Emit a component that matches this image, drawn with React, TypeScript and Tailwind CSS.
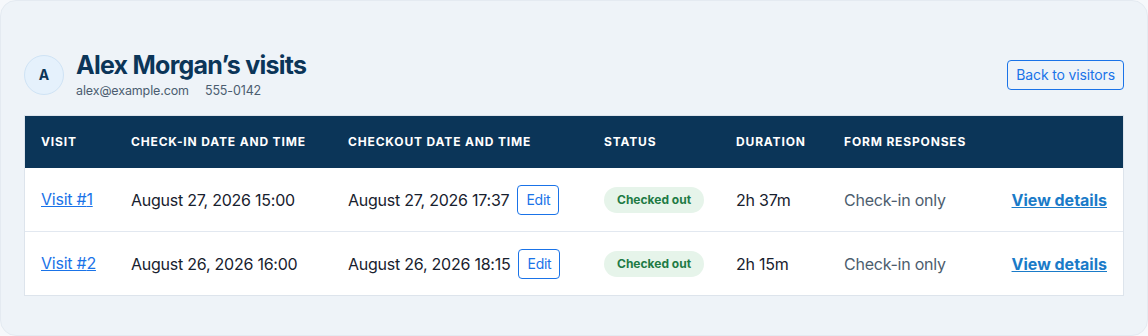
const visits = [
  {
    id: 1,
    checkIn: 'August 27, 2026 15:00',
    checkOut: 'August 27, 2026 17:37',
    duration: '2h 37m',
  },
  {
    id: 2,
    checkIn: 'August 26, 2026 16:00',
    checkOut: 'August 26, 2026 18:15',
    duration: '2h 15m',
  },
];

const th = 'px-4 py-4 text-left text-[12px] leading-5 font-bold uppercase tracking-[0.07em] text-white whitespace-nowrap';
const td = 'px-4 py-4 text-[16px] tracking-[-0.015em] whitespace-nowrap';

export default function App() {
  return (
    <div className="min-h-screen bg-[#f6f8fb] font-['Inter',sans-serif]">
      <div className="h-[336px] rounded-2xl border border-[#e4eaf1] bg-[#eef3f8] px-[23px] pt-[48px]">
        <div className="flex items-center justify-between">
          <div className="flex items-center gap-3">
            <div className="flex h-10 w-10 items-center justify-center rounded-full border border-[#cfe3f5] bg-[#e5f1fc] text-[14px] font-bold text-[#0b3558]">
              A
            </div>
            <div>
              <h1 className="text-[25px] leading-8 font-bold tracking-[-0.03em] text-[#0b3558]">
                Alex Morgan’s visits
              </h1>
              <div className="mt-px flex gap-4 text-[12.5px] leading-[18px] tracking-[-0.01em] text-[#4b5d70]">
                <span>alex@example.com</span>
                <span>555-0142</span>
              </div>
            </div>
          </div>
          <button className="h-[30px] rounded-[4px] border border-[#1a73e8] bg-transparent px-[8px] text-[14px] tracking-[-0.01em] text-[#1a73e8]">
            Back to visitors
          </button>
        </div>

        <div className="mt-[15px] border border-[#dde4ec] bg-white">
          <table className="w-full table-fixed border-collapse">
            <thead className="bg-[#0b3558]">
              <tr>
                <th className={`${th} w-[90px]`}>Visit</th>
                <th className={`${th} w-[217px]`}>Check-in date and time</th>
                <th className={`${th} w-[256px]`}>Checkout date and time</th>
                <th className={`${th} w-[132px]`}>Status</th>
                <th className={`${th} w-[108px]`}>Duration</th>
                <th className={`${th} w-[152px]`}>Form responses</th>
                <th className={th}></th>
              </tr>
            </thead>
            <tbody>
              {visits.map((v, i) => (
                <tr key={v.id} className={i > 0 ? 'border-t border-[#e2e8f0]' : ''}>
                  <td className={`${td} leading-[31px]`}>
                    <a href="#" className="text-[#1a73e8] underline">Visit #{v.id}</a>
                  </td>
                  <td className={`${td} text-[#18212e]`}>{v.checkIn}</td>
                  <td className={`${td} text-[#18212e]`}>
                    <div className="flex items-center gap-2">
                      <span>{v.checkOut}</span>
                      <button className="h-[30px] rounded-[4px] border border-[#1a73e8] px-[8px] text-[14px] text-[#1a73e8]">
                        Edit
                      </button>
                    </div>
                  </td>
                  <td className="px-4 py-4 whitespace-nowrap">
                    <span className="inline-flex h-[26px] items-center rounded-full bg-[#e6f4ea] px-[13px] text-[12px] font-bold text-[#1e7b45]">
                      Checked out
                    </span>
                  </td>
                  <td className={`${td} text-[#18212e]`}>{v.duration}</td>
                  <td className={`${td} text-[#4d5d6e]`}>Check-in only</td>
                  <td className="px-4 py-4 text-right text-[16px] whitespace-nowrap">
                    <a href="#" className="font-bold text-[#1a7bc8] underline">View details</a>
                  </td>
                </tr>
              ))}
            </tbody>
          </table>
        </div>
      </div>
    </div>
  );
}
